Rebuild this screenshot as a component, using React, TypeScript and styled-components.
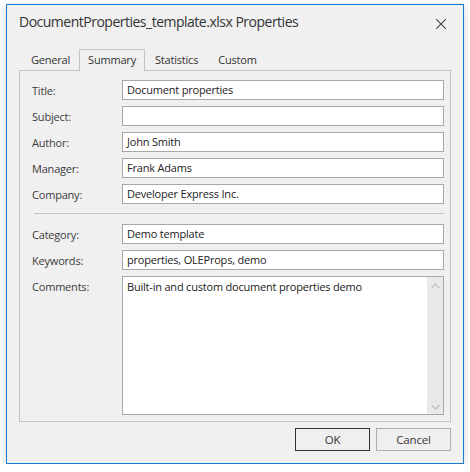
import React from "react";
import styled, { createGlobalStyle } from "styled-components";

const GlobalStyle = createGlobalStyle`
  html, body {
    margin: 0;
    padding: 0;
    background: #ffffff;
  }
  body {
    font-family: "Open Sans", "Noto Sans", sans-serif;
    font-size: 11px;
    letter-spacing: -0.2px;
    color: #333333;
  }
`;

const Window = styled.div`
  box-sizing: border-box;
  margin: 4px 0 0 6px;
  width: 458px;
  height: 460px;
  border: 1px solid #1979ca;
  background: #f0f0f0;
  box-shadow: 0 2px 8px rgba(0, 0, 0, 0.18);
  display: flex;
  flex-direction: column;
`;

const TitleBar = styled.div`
  height: 44px;
  display: flex;
  align-items: flex-start;
  justify-content: space-between;
  padding: 7px 17px 0 12px;
  box-sizing: border-box;
`;

const Caption = styled.div`
  font-size: 14px;
  letter-spacing: -0.5px;
  line-height: 20px;
  color: #333333;
`;

const CloseButton = styled.div`
  width: 10px;
  height: 10px;
  margin-top: 7px;
  display: flex;
`;

const Body = styled.div`
  padding: 0 12px;
  display: flex;
  flex-direction: column;
`;

const TabStrip = styled.div`
  display: flex;
  align-items: flex-end;
  height: 21px;
`;

const Tab = styled.div<{ $active?: boolean }>`
  box-sizing: border-box;
  height: ${(p) => (p.$active ? "22px" : "19px")};
  padding: ${(p) => (p.$active ? "0 8px" : "0 10px")};
  line-height: ${(p) => (p.$active ? "20px" : "18px")};
  border: ${(p) => (p.$active ? "1px solid #c4c4c4" : "none")};
  border-bottom: none;
  background: #f0f0f0;
  color: #333333;
  position: relative;
  margin-bottom: ${(p) => (p.$active ? "-1px" : "0")};
  z-index: ${(p) => (p.$active ? 1 : 0)};

  &:first-child {
    padding: 0 9px 0 12px;
  }
`;

const Panel = styled.div`
  box-sizing: border-box;
  height: 352px;
  border: 1px solid #c4c4c4;
  padding: 9px 6px 6px 12px;
  display: flex;
  flex-direction: column;
`;

const FieldGrid = styled.div`
  display: grid;
  grid-template-columns: 90px 1fr;
  grid-auto-rows: 20px;
  row-gap: 6px;
  align-items: center;
`;

const Label = styled.div<{ $top?: boolean }>`
  align-self: ${(p) => (p.$top ? "start" : "center")};
  padding-top: ${(p) => (p.$top ? "3px" : "0")};
  color: #3c3c3c;
`;

const TextBox = styled.div`
  box-sizing: border-box;
  height: 20px;
  border: 1px solid #a8a8a8;
  background: #ffffff;
  padding: 0 4px;
  line-height: 18px;
  color: #222222;
  white-space: nowrap;
  overflow: hidden;
`;

const Separator = styled.div`
  height: 1px;
  background: #c4c4c4;
  margin: 9px 0 10px 2px;
`;

const Memo = styled.div`
  box-sizing: border-box;
  height: 139px;
  border: 1px solid #a8a8a8;
  background: #ffffff;
  display: flex;
  margin-top: 6px;
`;

const MemoText = styled.div`
  flex: 1;
  padding: 2px 4px;
  line-height: 16px;
  color: #222222;
`;

const ScrollBar = styled.div`
  width: 16px;
  background: #e9e9e9;
  display: flex;
  flex-direction: column;
  justify-content: space-between;
  align-items: center;
  padding: 6px 0 4px;
`;

const Footer = styled.div`
  display: flex;
  justify-content: flex-end;
  gap: 6px;
  margin-top: 6px;
`;

const Button = styled.div<{ $default?: boolean }>`
  box-sizing: border-box;
  width: 75px;
  height: 23px;
  border: 1px solid ${(p) => (p.$default ? "#333333" : "#adadad")};
  background: #efefef;
  display: flex;
  align-items: center;
  justify-content: center;
  color: #333333;
  font-size: 11.5px;
`;

const Chevron = ({ up }: { up?: boolean }) => (
  <svg width="9" height="6" viewBox="0 0 9 6">
    <path
      d={up ? "M0.5 5 L4.5 1 L8.5 5" : "M0.5 1 L4.5 5 L8.5 1"}
      fill="none"
      stroke="#c2c2c2"
      strokeWidth="1.4"
    />
  </svg>
);

const fields1 = [
  ["Title:", "Document properties"],
  ["Subject:", ""],
  ["Author:", "John Smith"],
  ["Manager:", "Frank Adams"],
  ["Company:", "Developer Express Inc."],
];

const fields2 = [
  ["Category:", "Demo template"],
  ["Keywords:", "properties, OLEProps, demo"],
];

export default function App() {
  return (
    <>
      <GlobalStyle />
      <Window>
        <TitleBar>
          <Caption>DocumentProperties_template.xlsx Properties</Caption>
          <CloseButton>
            <svg width="10" height="10" viewBox="0 0 10 10">
              <path d="M0 0 L10 10 M10 0 L0 10" stroke="#444" strokeWidth="1.1" />
            </svg>
          </CloseButton>
        </TitleBar>
        <Body>
          <TabStrip>
            <Tab>General</Tab>
            <Tab $active>Summary</Tab>
            <Tab>Statistics</Tab>
            <Tab>Custom</Tab>
          </TabStrip>
          <Panel>
            <FieldGrid>
              {fields1.map(([l, v]) => (
                <React.Fragment key={l}>
                  <Label>{l}</Label>
                  <TextBox>{v}</TextBox>
                </React.Fragment>
              ))}
            </FieldGrid>
            <Separator />
            <FieldGrid>
              {fields2.map(([l, v]) => (
                <React.Fragment key={l}>
                  <Label>{l}</Label>
                  <TextBox>{v}</TextBox>
                </React.Fragment>
              ))}
            </FieldGrid>
            <FieldGrid style={{ gridAutoRows: "auto" }}>
              <Label $top style={{ marginTop: 6 }}>Comments:</Label>
              <Memo>
                <MemoText>Built-in and custom document properties demo</MemoText>
                <ScrollBar>
                  <Chevron up />
                  <Chevron />
                </ScrollBar>
              </Memo>
            </FieldGrid>
          </Panel>
          <Footer>
            <Button $default>OK</Button>
            <Button>Cancel</Button>
          </Footer>
        </Body>
      </Window>
    </>
  );
}
